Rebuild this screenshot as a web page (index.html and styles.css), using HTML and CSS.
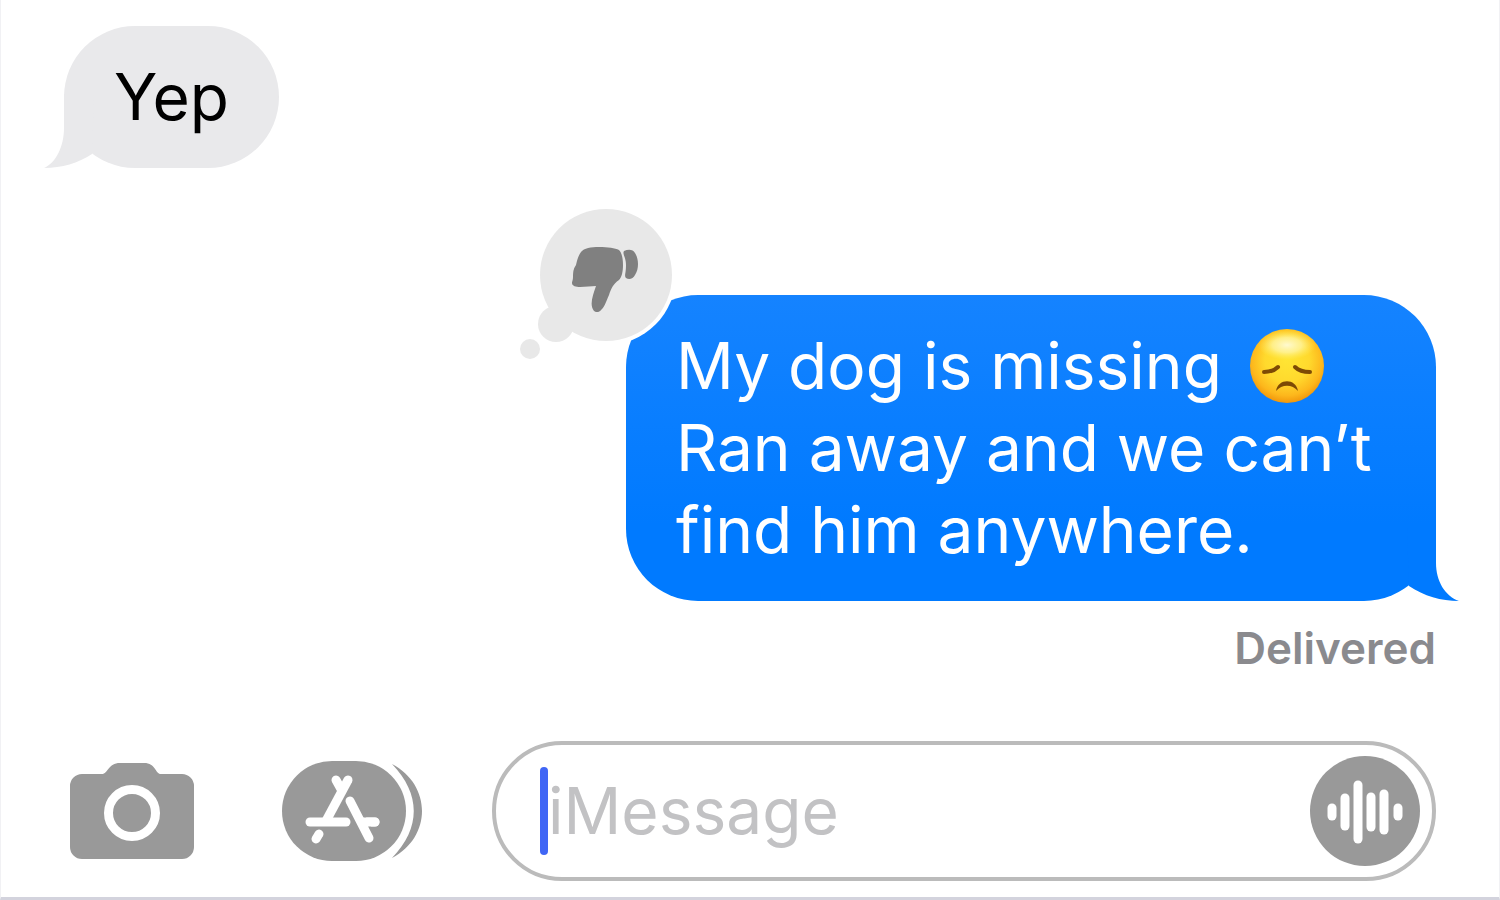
FILE: index.html
```html
<!DOCTYPE html>
<html lang="en">
<head>
  <meta charset="UTF-8">
  <meta name="viewport" content="width=device-width, initial-scale=1.0">
  <title>Messages</title>
  <link rel="stylesheet" href="styles.css">
</head>
<body>
  <main class="messages">
    <div class="bubble received">
      Yep
      <svg class="tail" width="60" height="74" viewBox="0 0 60 74" aria-hidden="true">
        <path d="M20 0 V34 C20 52 12 69 0 74 C18 74 34 69 48 60 L50 0 Z" fill="#e9e9eb"/>
      </svg>
    </div>

    <div class="bubble sent">
      My dog is missing
      <svg class="emoji" viewBox="0 0 74 74" role="img" aria-label="disappointed face">
        <defs>
          <radialGradient id="face" cx="0.5" cy="0.42" r="0.6">
            <stop offset="0" stop-color="#ffe534"/>
            <stop offset="0.5" stop-color="#ffd92d"/>
            <stop offset="0.8" stop-color="#fdb71c"/>
            <stop offset="1" stop-color="#ef9008"/>
          </radialGradient>
          <radialGradient id="shine">
            <stop offset="0" stop-color="#fffbd8" stop-opacity="0.95"/>
            <stop offset="0.5" stop-color="#fff8b0" stop-opacity="0.7"/>
            <stop offset="1" stop-color="#fff066" stop-opacity="0"/>
          </radialGradient>
        </defs>
        <circle cx="37" cy="37" r="37" fill="url(#face)"/>
        <ellipse cx="37" cy="16" rx="29" ry="15" fill="url(#shine)"/>
        <g fill="none" stroke="#7d4a05" stroke-width="4" stroke-linecap="round">
          <path d="M14 43 Q23 43 28 38"/>
          <path d="M60 43 Q50 43 45 38"/>
        </g>
        <path d="M26 62 C28 49 46 49 48 62 C42 55 32 55 26 62 Z" fill="#7d4a05"/>
      </svg><br>
      Ran away and we can’t<br>
      find him anywhere.
      <svg class="tail" width="60" height="74" viewBox="0 0 60 74" aria-hidden="true">
        <path d="M37 0 V36 C37 54 46 69 60 74 C42 74 25 69 10 59 L8 0 Z" fill="#007aff"/>
      </svg>
      <svg class="reaction" width="162" height="162" viewBox="0 0 162 162" role="img" aria-label="Disliked">
        <circle cx="90" cy="70" r="70" fill="#fff"/>
        <g fill="#e8e8e8">
          <circle cx="90" cy="70" r="66"/>
          <circle cx="40" cy="119" r="18"/>
          <circle cx="14" cy="144" r="10"/>
        </g>
        <g fill="#808080">
          <path d="M65 47 C68 43 75 42 83 42 C92 42 99 43 103 45 C106 48 107 54 107 60 C107 66 106 72 103 75 C97 79 95 84 93 90 C90 97 88 103 85 105 C83 108 79 107 78 106 C73 100 77 90 80 81 C75 81 70 82 64 82 C60 82 56 81 56 78 C56 76 57 75 57 72 C57 68 57 64 60 60 C61 56 62 51 65 47 Z"/>
          <path d="M108 46 C112 44 117 44 119 48 C123 54 123 64 119 70 C117 74 113 75 110 73 C108 71 110 69 110 60 C110 52 106 49 108 46 Z"/>
        </g>
      </svg>
    </div>
    <p class="status">Delivered</p>
  </main>

  <form class="composer">
    <button type="button" class="icon-button" aria-label="Camera">
      <svg width="124" height="96" viewBox="0 0 124 96">
        <path d="M12 11 H32 C38 11 38 0 50 0 H74 C86 0 85 11 91 11 H112 A12 12 0 0 1 124 23 V84 A12 12 0 0 1 112 96 H12 A12 12 0 0 1 0 84 V23 A12 12 0 0 1 12 11 Z" fill="#999"/>
        <circle cx="62" cy="50" r="23.5" fill="none" stroke="#fff" stroke-width="9"/>
      </svg>
    </button>
    <button type="button" class="icon-button" aria-label="Apps">
      <svg width="140" height="100" viewBox="0 0 140 100">
        <rect width="124" height="100" rx="50" fill="#999"/>
        <path d="M110 3 C150 24 150 76 110 97 C139 67 139 33 110 3 Z" fill="#999"/>
        <g stroke="#fff" stroke-width="9" stroke-linecap="round" fill="none">
          <path d="M66 19 L44 60"/>
          <path d="M54 19 L59 28"/>
          <path d="M28 61 H64"/>
          <path d="M80 61 H93"/>
          <path d="M37 73 L34 78"/>
        </g>
        <path d="M67 39 L87 77" stroke="#999" stroke-width="14"/>
        <path d="M82 61 H93 M68 40 L87 77" stroke="#fff" stroke-width="9" stroke-linecap="round" fill="none"/>
      </svg>
    </button>
    <div class="field">
      <span class="caret"></span>
      <input type="text" class="field-input" placeholder="iMessage" aria-label="iMessage">
      <button type="button" class="audio-button" aria-label="Record audio">
        <svg width="110" height="110" viewBox="0 0 110 110">
          <circle cx="55" cy="55" r="55" fill="#999"/>
          <g stroke="#fff" stroke-width="9" stroke-linecap="round">
            <path d="M22 52 V60"/>
            <path d="M35 42 V70"/>
            <path d="M48 29 V83"/>
            <path d="M61 41 V71"/>
            <path d="M74 38 V74"/>
            <path d="M88 52 V60"/>
          </g>
        </svg>
      </button>
    </div>
  </form>
</body>
</html>
```
FILE: styles.css
```css
* {
  box-sizing: border-box;
}
body {
  margin: 0;
  min-height: 100vh;
  display: flex;
  flex-direction: column;
  background-color: #fff;
  border: 1px solid #f1f1f4;
  border-top: none;
  border-bottom: 3px solid #d3d3dd;
  font-family: Inter, "Liberation Sans", sans-serif;
}
.messages {
  flex: 1;
  display: flex;
  flex-direction: column;
  padding: 26px 63px 0;
}
.bubble {
  position: relative;
  padding: 30px 50px;
  border-radius: 72px;
  font-size: 64px;
  line-height: 82px;
}
.received {
  align-self: flex-start;
  background-color: #e9e9eb;
  color: #000;
}
.sent {
  align-self: flex-end;
  width: 810px;
  max-width: 100%;
  margin-top: 127px;
  background: linear-gradient(#1583ff, #007aff 75%);
  color: #fff;
}
.tail {
  position: absolute;
  bottom: 0;
}
.received .tail {
  left: -20px;
}
.sent .tail {
  right: -23px;
}
.reaction {
  position: absolute;
  top: -90px;
  left: -110px;
}
.emoji {
  width: 74px;
  height: 74px;
  margin-left: 10px;
  vertical-align: -14px;
}
.status {
  align-self: flex-end;
  margin: 22px 0 0;
  color: #8a8a8e;
  font-size: 44px;
  font-weight: 600;
  line-height: 50px;
}
.composer {
  display: flex;
  align-items: center;
  padding: 0 63px 16px 69px;
}
button {
  padding: 0;
  border: none;
  background: none;
  cursor: pointer;
}
button svg {
  display: block;
}
.icon-button {
  flex: none;
  margin-right: 88px;
}
.icon-button + .icon-button {
  margin-right: 70px;
}
.field {
  flex: 1;
  min-width: 0;
  height: 140px;
  display: flex;
  align-items: center;
  padding: 0 12px 0 44px;
  border: 4px solid #bbb;
  border-radius: 70px;
}
.caret {
  flex: none;
  width: 8px;
  height: 88px;
  border-radius: 4px;
  background-color: #4066f5;
}
.field-input {
  flex: 1;
  min-width: 0;
  padding: 0;
  border: none;
  outline: none;
  background: none;
  color: #000;
  font-family: inherit;
  font-size: 64px;
  line-height: 82px;
}
.field-input::placeholder {
  color: #c2c2c4;
}
```
